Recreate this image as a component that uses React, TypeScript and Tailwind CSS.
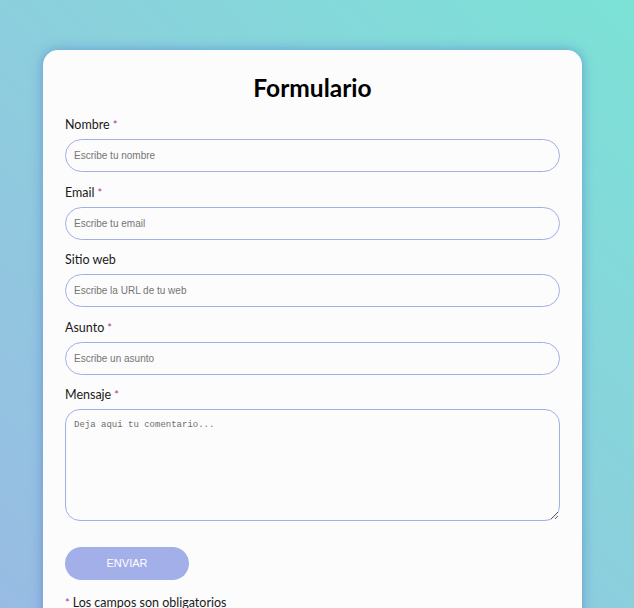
const fields = [
  { label: "Nombre", required: true, placeholder: "Escribe tu nombre", type: "text" },
  { label: "Email", required: true, placeholder: "Escribe tu email", type: "email" },
  { label: "Sitio web", required: false, placeholder: "Escribe la URL de tu web", type: "url" },
  { label: "Asunto", required: true, placeholder: "Escribe un asunto", type: "text" },
];

const Star = () => <span className="ml-[3px] text-[#a0409a] text-[11px] align-top">*</span>;

const App = () => {
  return (
    <div className="min-h-screen w-full bg-linear-to-tr from-[#98bbe3] to-[#7be2d6] pl-[43px] pt-[50px] overflow-hidden h-[608px] font-['Lato',sans-serif]">
      <div className="w-[539px] bg-[#fcfcfc] rounded-[15px] shadow-[0_0_12px_rgba(70,110,200,0.55)] px-[22px] pt-[20px] pb-[20px]">
        <h1 className="text-center text-[24.5px] font-bold leading-[36px] h-[36px] text-black mb-[10px]">Formulario</h1>
        <form onSubmit={(e) => e.preventDefault()}>
          {fields.map((f) => (
            <div key={f.label} className="mb-[11.5px]">
              <label className="block text-[12.5px] leading-[18px] h-[18px] text-[#1a1a1a] mb-[5px]">
                {f.label}
                {f.required && <Star />}
              </label>
              <input
                type={f.type}
                placeholder={f.placeholder}
                className="w-[495px] h-[33px] rounded-full border border-[#a3aee8] bg-[#fcfcfc] px-[8px] text-[10px] font-['Liberation_Sans',Arial,sans-serif] placeholder:text-[#757575] outline-none"
              />
            </div>
          ))}
          <div>
            <label className="block text-[12.5px] leading-[18px] h-[18px] text-[#1a1a1a] mb-[5px]">
              Mensaje
              <Star />
            </label>
            <textarea
              placeholder="Deja aqui tu comentario..."
              className="block w-[495px] h-[112px] rounded-[15px] border border-[#a3aee8] bg-[#fcfcfc] px-[8px] py-[9px] text-[9px] leading-[13px] font-['Liberation_Mono',monospace] placeholder:text-[#6e6e6e] outline-none"
            />
          </div>
          <button
            type="submit"
            className="mt-[26px] w-[124px] h-[33px] rounded-full bg-[#a3afe8] text-white text-[11px] font-['Liberation_Sans',Arial,sans-serif]"
          >
            ENVIAR
          </button>
          <p className="mt-[14px] text-[12.5px] leading-[18px] text-[#1a1a1a]">
            <span className="text-[#a0409a] text-[11px] mr-[3px] align-top">*</span>Los campos son obligatorios
          </p>
        </form>
      </div>
    </div>
  );
};

export default App;
